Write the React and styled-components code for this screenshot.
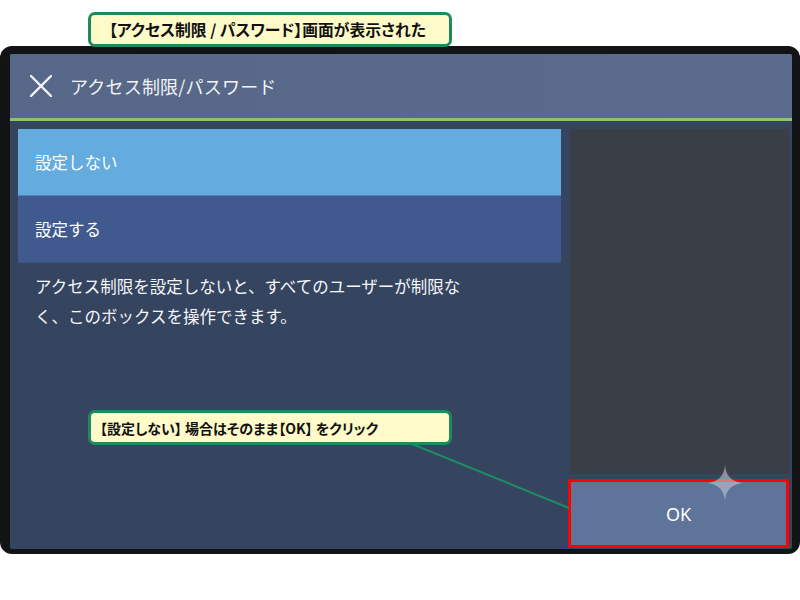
import React from "react";
import styled, { createGlobalStyle } from "styled-components";

const Global = createGlobalStyle`
  html, body { margin: 0; padding: 0; background: #ffffff; }
  body { font-family: "Noto Sans CJK JP", "Noto Sans", sans-serif; }
`;

const Page = styled.div`
  position: relative;
  width: 800px;
  height: 600px;
  padding-top: 46px;
  box-sizing: border-box;
  background: #ffffff;
  overflow: hidden;
`;

const Frame = styled.div`
  width: 800px;
  height: 508px;
  box-sizing: border-box;
  padding: 8px 8px 5px 10px;
  background: #121314;
  border-radius: 12px;
`;

const Screen = styled.div`
  height: 100%;
  display: flex;
  flex-direction: column;
  background: #35445f;
  border-radius: 2px;
  overflow: hidden;
`;

const Header = styled.div`
  height: 64px;
  flex: none;
  display: flex;
  align-items: center;
  gap: 18px;
  padding-left: 20px;
  background: linear-gradient(90deg, #576788 0%, #5b6b8c 100%);
  border-bottom: 3px solid #8cc46b;
`;

const CloseButton = styled.svg`
  width: 22px;
  height: 22px;
  flex: none;
`;

const Title = styled.div`
  color: #f2f4f8;
  font-size: 18px;
  letter-spacing: 0.2px;
`;

const Body = styled.div`
  flex: 1;
  display: flex;
  gap: 9px;
  padding: 8px 3px 1px 8px;
`;

const Main = styled.div`
  width: 543px;
  display: flex;
  flex-direction: column;
`;

const Option = styled.div`
  height: 66px;
  display: flex;
  align-items: center;
  padding-left: 17px;
  color: #ffffff;
  font-size: 16.5px;
  background: ${(p) => (p.$selected ? "#63acdd" : "#405a90")};
  border-bottom: 1px solid ${(p) => (p.$selected ? "#4a86b6" : "#3a507f")};
`;

const Description = styled.p`
  margin: 8px 0 0;
  padding-left: 17px;
  color: #f4f6fa;
  font-size: 16.5px;
  line-height: 30px;
`;

const Side = styled.div`
  flex: 1;
  display: flex;
  flex-direction: column;
  gap: 5px;
`;

const Preview = styled.div`
  flex: 1;
  background: #3a3e47;
`;

const OkButton = styled.button`
  position: relative;
  height: 69px;
  flex: none;
  margin: 0 0 0 -2px;
  border: 3px solid #ff0000;
  background: #5e7499;
  color: #ffffff;
  font-family: "Noto Sans", "Noto Sans CJK JP", sans-serif;
  font-size: 18px;
  padding: 0;
`;

const Sparkle = styled.svg`
  position: absolute;
  left: 137px;
  top: -17px;
  width: 34px;
  height: 36px;
`;

const Callout = styled.div`
  position: absolute;
  left: 88px;
  top: ${(p) => p.$top}px;
  width: 364px;
  height: 35px;
  box-sizing: border-box;
  display: flex;
  align-items: center;
  padding-left: ${(p) => p.$indent}px;
  background: #fffbc9;
  border: 3px solid #1f8a62;
  border-radius: 7px;
  color: #111111;
  font-size: ${(p) => p.$size}px;
  font-weight: 700;
  font-feature-settings: "palt";
  white-space: pre;
  z-index: 2;
`;

const Leader = styled.svg`
  position: absolute;
  left: 0;
  top: 0;
  width: 800px;
  height: 600px;
  pointer-events: none;
  z-index: 1;
`;

export default function App() {
  return (
    <>
      <Global />
      <Page>
        <Frame>
          <Screen>
            <Header>
              <CloseButton viewBox="0 0 22 22">
                <path d="M1 1 L21 21 M21 1 L1 21" stroke="#f4f6fa" strokeWidth="2.4" strokeLinecap="round" />
              </CloseButton>
              <Title>アクセス制限/パスワード</Title>
            </Header>
            <Body>
              <Main>
                <Option $selected>設定しない</Option>
                <Option>設定する</Option>
                <Description>
                  アクセス制限を設定しないと、すべてのユーザーが制限な
                  <br />
                  く、このボックスを操作できます。
                </Description>
              </Main>
              <Side>
                <Preview />
                <OkButton>
                  OK
                  <Sparkle viewBox="0 0 34 36">
                    <path
                      d="M17 0 C18 10 22 16 34 18 C22 20 18 26 17 36 C16 26 12 20 0 18 C12 16 16 10 17 0 Z"
                      fill="rgba(190,198,214,0.6)"
                    />
                  </Sparkle>
                </OkButton>
              </Side>
            </Body>
          </Screen>
        </Frame>
        <Callout $top={12} $indent={18} $size={15.8}>【アクセス制限 / パスワード】画面が表示された</Callout>
        <Callout $top={410} $indent={9} $size={14}>【設定しない】 場合はそのまま【OK】 をクリック</Callout>
        <Leader viewBox="0 0 800 600">
          <line x1="412" y1="444" x2="569" y2="508" stroke="#1f8a62" strokeWidth="2" />
        </Leader>
      </Page>
    </>
  );
}
